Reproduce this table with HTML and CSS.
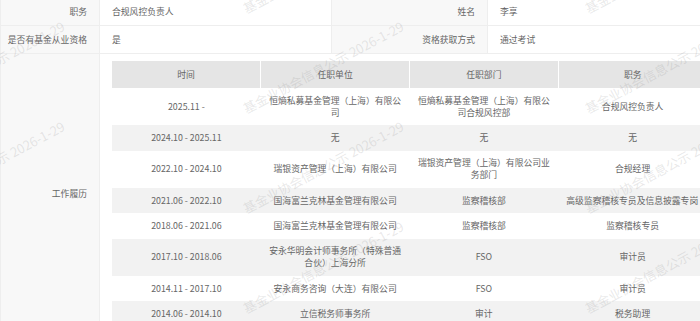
FILE: index.html
```html
<!DOCTYPE html>
<html lang="zh-CN">
<head>
<meta charset="utf-8">
<title>基金从业人员信息</title>
<link rel="stylesheet" href="styles.css">
</head>
<body>
<div class="page">
  <table class="info">
    <colgroup>
      <col class="col-l1"><col class="col-v1"><col class="col-l2"><col class="col-v2">
    </colgroup>
    <tr>
      <th>职务</th><td>合规风控负责人</td>
      <th>姓名</th><td>李享</td>
    </tr>
    <tr>
      <th>是否有基金从业资格</th><td>是</td>
      <th>资格获取方式</th><td>通过考试</td>
    </tr>
    <tr>
      <th>工作履历</th>
      <td colspan="3" class="resume-cell">
        <table class="resume">
          <thead>
            <tr><th>时间</th><th>任职单位</th><th>任职部门</th><th>职务</th></tr>
          </thead>
          <tbody>
            <tr><td>2025.11 -</td><td>恒熵私募基金管理（上海）有限公司</td><td>恒熵私募基金管理（上海）有限公司合规风控部</td><td>合规风控负责人</td></tr>
            <tr><td>2024.10 - 2025.11</td><td>无</td><td>无</td><td>无</td></tr>
            <tr><td>2022.10 - 2024.10</td><td>瑞银资产管理（上海）有限公司</td><td>瑞银资产管理（上海）有限公司业务部门</td><td>合规经理</td></tr>
            <tr><td>2021.06 - 2022.10</td><td>国海富兰克林基金管理有限公司</td><td>监察稽核部</td><td class="nowrap">高级监察稽核专员及信息披露专岗</td></tr>
            <tr><td>2018.06 - 2021.06</td><td>国海富兰克林基金管理有限公司</td><td>监察稽核部</td><td>监察稽核专员</td></tr>
            <tr><td>2017.10 - 2018.06</td><td>安永华明会计师事务所（特殊普通合伙）上海分所</td><td>FSO</td><td>审计员</td></tr>
            <tr><td>2014.11 - 2017.10</td><td>安永商务咨询（大连）有限公司</td><td>FSO</td><td>审计员</td></tr>
            <tr><td>2014.06 - 2014.10</td><td>立信税务师事务所</td><td>审计</td><td>税务助理</td></tr>
          </tbody>
        </table>
      </td>
    </tr>
  </table>

  <div class="watermarks" aria-hidden="true">
    <span class="wm wm-a1">基金业协会信息公示 2026-1-29</span>
    <span class="wm wm-a2">基金业协会信息公示 2026-1-29</span>
    <span class="wm wm-a3">基金业协会信息公示 2026-1-29</span>
    <span class="wm wm-b1">基金业协会信息公示 2026-1-29</span>
    <span class="wm wm-b2">基金业协会信息公示 2026-1-29</span>
    <span class="wm wm-b3">基金业协会信息公示 2026-1-29</span>
    <span class="wm wm-c1">基金业协会信息公示 2026-1-29</span>
    <span class="wm wm-c2">基金业协会信息公示 2026-1-29</span>
    <span class="wm wm-c3">基金业协会信息公示 2026-1-29</span>
    <span class="wm wm-d2">基金业协会信息公示 2026-1-29</span>
    <span class="wm wm-d3">基金业协会信息公示 2026-1-29</span>
  </div>
</div>
</body>
</html>
```

FILE: styles.css
```css
html, body {
  margin: 0;
  padding: 0;
  background: #fff;
  overflow: hidden;
}

body {
  font-family: "Noto Sans CJK SC", "Microsoft YaHei", sans-serif;
  font-size: 8.8px;
  color: #666;
}

.page {
  position: relative;
  width: 720px;
  height: 340px;
  margin-top: -3px;
}

.info {
  width: 720px;
  table-layout: fixed;
  border-collapse: collapse;
}

.col-l1 { width: 99px; }
.col-v1 { width: 232px; }
.col-l2 { width: 156px; }
.col-v2 { width: 233px; }

.info > tbody > tr > th,
.info > tbody > tr > td {
  border: 1px solid #eeeeee;
  padding: 7px 12px;
  line-height: 13px;
  vertical-align: middle;
}

.info > tbody > tr > th {
  background: #f8f8f8;
  font-weight: normal;
  text-align: right;
  color: #666;
  padding-left: 2px;
  white-space: nowrap;
}

.info > tbody > tr > td {
  text-align: left;
  background: #fff;
  color: #666;
}

.info > tbody > tr > td.resume-cell {
  padding: 7px 12px;
}

.resume {
  width: 595px;
  table-layout: fixed;
  border-collapse: collapse;
}

.resume th {
  background: #e5e5e5;
  font-weight: normal;
  color: #666;
  padding: 7px 5px;
  line-height: 13px;
  text-align: center;
  border-right: 1px solid #fff;
}

.resume th:last-child {
  border-right: none;
}

.resume td {
  padding: 6.6px 5px;
  line-height: 12.1px;
  text-align: center;
  color: #666;
  vertical-align: middle;
}

.resume tbody tr:nth-child(even) td {
  background: #f2f2f2;
}

.resume td.nowrap {
  white-space: nowrap;
  text-align: left;
  padding-left: 8px;
}

/* watermark overlay */
.watermarks {
  position: absolute;
  inset: 0;
  pointer-events: none;
  overflow: hidden;
}

.wm {
  position: absolute;
  font-size: 13px;
  line-height: 13px;
  white-space: nowrap;
  color: rgba(140, 140, 140, 0.2);
  transform-origin: 0 100%;
  transform: rotate(-28deg);
}

.wm-a1 { left: -92px; top: 5px; }
.wm-a2 { left: 247px; top: 5px; }
.wm-a3 { left: 589px; top: 5px; }
.wm-b1 { left: -92px; top: 105px; }
.wm-b2 { left: 247px; top: 105px; }
.wm-b3 { left: 589px; top: 105px; }
.wm-c1 { left: -92px; top: 205px; }
.wm-c2 { left: 247px; top: 205px; }
.wm-c3 { left: 589px; top: 205px; }
.wm-d2 { left: 247px; top: 305px; }
.wm-d3 { left: 589px; top: 305px; }
```
